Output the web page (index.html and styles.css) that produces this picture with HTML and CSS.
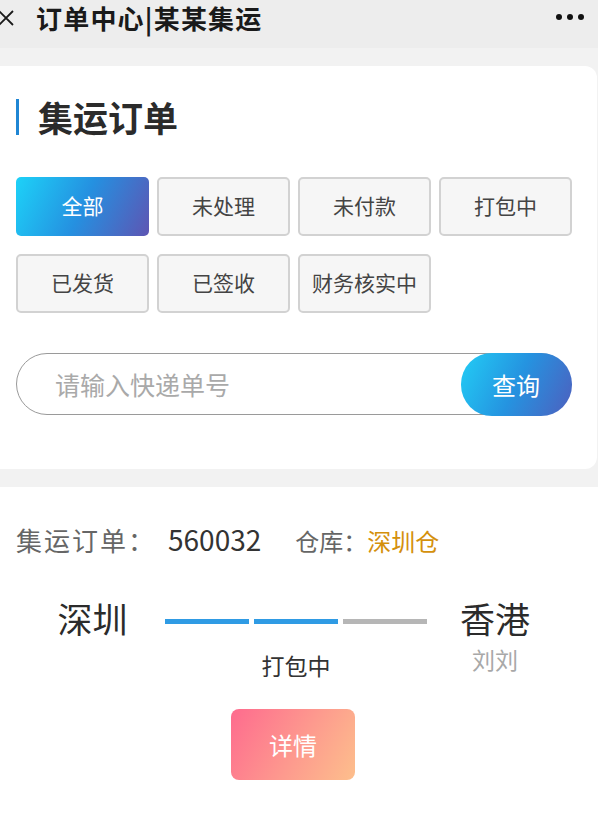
FILE: index.html
```html
<!DOCTYPE html>
<html lang="zh">
<head>
<meta charset="utf-8">
<link rel="stylesheet" href="styles.css">
</head>
<body>
<header class="nav">
  <svg class="nav-close" width="16" height="16" viewBox="0 0 16 16"><path d="M1 1L15 15M15 1L1 15" stroke="#1a1a1a" stroke-width="1.8" fill="none"/></svg>
  <div class="nav-title">订单中心|某某集运</div>
  <div class="nav-more"><span></span><span></span><span></span></div>
</header>
<main class="page">
  <section class="card">
    <h1 class="card-title">集运订单</h1>
    <div class="tabs">
      <div class="tab active">全部</div>
      <div class="tab">未处理</div>
      <div class="tab">未付款</div>
      <div class="tab">打包中</div>
      <div class="tab">已发货</div>
      <div class="tab">已签收</div>
      <div class="tab">财务核实中</div>
    </div>
    <div class="search">
      <div class="search-input">请输入快递单号</div>
      <div class="search-btn">查询</div>
    </div>
  </section>
  <section class="order">
    <div class="order-info">
      <span class="label">集运订单：</span><span class="num">560032</span>
      <span class="wh-label">仓库：</span><span class="wh">深圳仓</span>
    </div>
    <div class="route">
      <div class="city">深圳</div>
      <div class="bars"><span class="bar on"></span><span class="bar on"></span><span class="bar"></span></div>
      <div class="city">香港</div>
      <div></div>
      <div class="status">打包中</div>
      <div class="receiver">刘刘</div>
    </div>
    <div class="actions"><div class="detail-btn">详情</div></div>
  </section>
</main>
</body>
</html>
```
FILE: styles.css
```css
* { box-sizing: border-box; margin: 0; padding: 0; }
body {
  font-family: "Noto Sans CJK SC", "Noto Sans", sans-serif;
  background: #f2f2f2;
  width: 598px;
  overflow: hidden;
}
.nav {
  height: 48px;
  background: #ededed;
  display: flex;
  align-items: flex-start;
}
.nav-close { margin-top: 10px; margin-left: -2px; }
.nav-title {
  margin-left: 22px;
  font-size: 26px;
  line-height: 36px;
  font-weight: 700;
  color: #1a1a1a;
  letter-spacing: 1.2px;
}
.nav-more {
  margin-left: auto;
  margin-right: 14px;
  margin-top: 14px;
  display: flex;
  gap: 5px;
}
.nav-more span { width: 6px; height: 6px; border-radius: 50%; background: #111; }
.page { padding-top: 18px; }
.card {
  background: #fff;
  border-radius: 0 12px 12px 0;
  width: 597px;
  padding: 33px 0 54px 16px;
}
.card-title {
  font-size: 35px;
  line-height: 40px;
  font-weight: 700;
  color: #2b2b2b;
  border-left: 3px solid #1f86d4;
  padding-left: 19px;
  height: 36px;
  display: flex;
  align-items: center;
}
.tabs {
  margin-top: 42px;
  display: grid;
  grid-template-columns: repeat(4, 133px);
  column-gap: 8px;
  row-gap: 18px;
}
.tab {
  height: 59px;
  border: 2px solid #d2d2d2;
  border-radius: 5px;
  background: #f6f6f6;
  display: flex;
  align-items: center;
  justify-content: center;
  font-size: 21px;
  color: #444;
  padding-bottom: 3px;
}
.tab.active {
  border: none;
  color: #fff;
  background: linear-gradient(115deg, #1dd2f8 0%, #2590e0 50%, #5e55b3 100%);
}
.search {
  margin-top: 40px;
  width: 555px;
  height: 62px;
  display: flex;
  align-items: stretch;
  border: 1.5px solid #9a9a9a;
  border-radius: 31px;
}
.search-input {
  flex: 1;
  display: flex;
  align-items: center;
  padding-left: 38px;
  font-size: 25px;
  color: #a9a9a9;
}
.search-btn {
  width: 111px;
  margin: -1.5px -1.5px -1.5px 0;
  border-radius: 31px;
  background: linear-gradient(115deg, #22cdf5 0%, #2593e0 50%, #4e5fbe 100%);
  color: #fff;
  font-size: 24px;
  display: flex;
  align-items: center;
  justify-content: center;
}
.order {
  margin-top: 18px;
  background: #fff;
  height: 340px;
  padding-top: 32px;
}
.order-info {
  padding-left: 16px;
  line-height: 40px;
  display: flex;
  align-items: baseline;
}
.label { font-size: 26px; color: #666; letter-spacing: 2px; }
.num { font-size: 28px; color: #333; margin-left: 12px; }
.wh-label { font-size: 24px; color: #666; margin-left: 34px; }
.wh { font-size: 24px; color: #d4900c; }
.route {
  margin-top: 37px;
  padding-left: 20px;
  display: grid;
  grid-template-columns: 145px 262px 136px;
  align-items: start;
}
.city { font-size: 35px; line-height: 40px; color: #2b2b2b; text-align: center; }
.bars { display: flex; gap: 5px; margin-top: 21px; }
.bar { flex: 1; height: 5px; background: #b6b6b6; }
.bar.on { background: #2f9be4; }
.status { font-size: 23px; color: #333; text-align: center; line-height: 32px; margin-top: 11px; }
.receiver { font-size: 23px; color: #a8a8a8; text-align: center; line-height: 32px; margin-top: 5px; }
.actions { display: flex; padding-left: 231px; margin-top: 28px; }
.detail-btn {
  width: 124px;
  height: 71px;
  border-radius: 8px;
  background: linear-gradient(120deg, #fe6b8e 0%, #fd9a8e 55%, #fdbf8c 100%);
  color: #fff;
  font-size: 24px;
  display: flex;
  align-items: center;
  justify-content: center;
}
```
